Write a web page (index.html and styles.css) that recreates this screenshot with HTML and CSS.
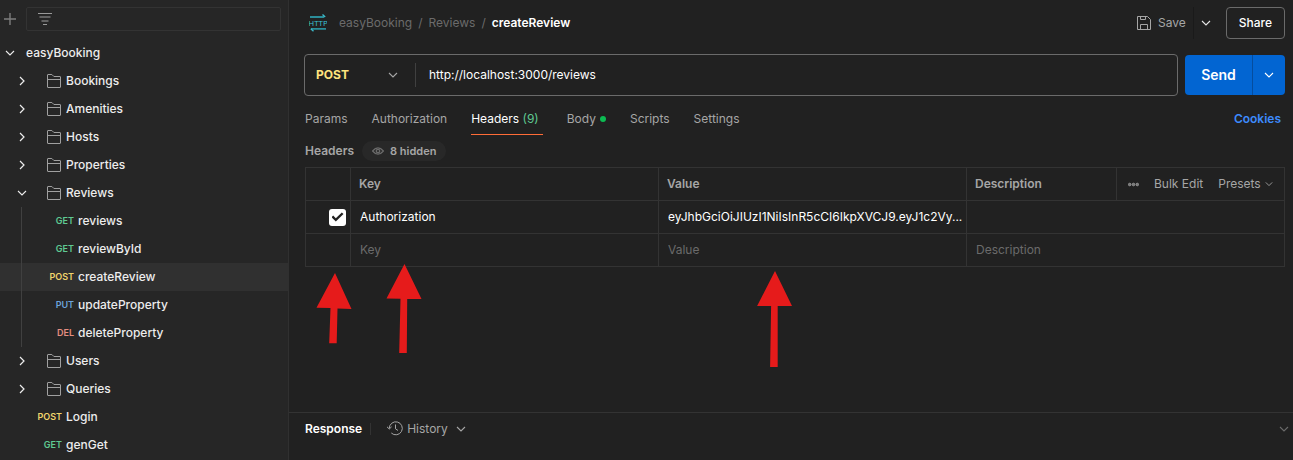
FILE: index.html
```html
<!DOCTYPE html>
<html lang="en">
<head>
<meta charset="utf-8">
<title>createReview</title>
<link rel="stylesheet" href="styles.css">
</head>
<body>
<svg width="0" height="0" class="defs" aria-hidden="true">
  <symbol id="down" viewBox="0 0 10 10"><path d="M1 3l4 4 4-4" fill="none" stroke="currentColor" stroke-width="1.1"/></symbol>
  <symbol id="right" viewBox="0 0 10 10"><path d="M3 1l4 4-4 4" fill="none" stroke="currentColor" stroke-width="1.2"/></symbol>
  <symbol id="folder" viewBox="0 0 14 14"><path d="M.5 13V.9q0-.4.4-.4h4l2 2h6.200q.4 0 .4.4V13q0 .5-.4.5H.9q-.4 0-.4-.5zM.5 5.500h13" fill="none" stroke="currentColor"/></symbol>
</svg>
<div class="app">
  <aside class="sidebar">
    <div class="tools">
      <button class="add" type="button" aria-label="New"><svg width="12" height="12" viewBox="0 0 12 12"><path d="M6 0v12M0 6h12" stroke="currentColor" stroke-width="1.4"/></svg></button>
      <label class="filter">
        <svg width="14" height="12" viewBox="0 0 14 12"><path d="M0 .5h14" stroke="#999"/><path d="M1.500 4h11M3.500 8h7" stroke="#777" stroke-width="1.6"/><path d="M5 11.500h4" stroke="#999"/></svg>
        <input type="text" aria-label="Filter">
      </label>
    </div>
    <ul class="tree">
      <li><button class="row root" type="button"><svg class="chev"><use href="#down"/></svg>easyBooking</button></li>
      <li><button class="row folder" type="button"><svg class="chev"><use href="#right"/></svg><svg class="dir"><use href="#folder"/></svg>Bookings</button></li>
      <li><button class="row folder" type="button"><svg class="chev"><use href="#right"/></svg><svg class="dir"><use href="#folder"/></svg>Amenities</button></li>
      <li><button class="row folder" type="button"><svg class="chev"><use href="#right"/></svg><svg class="dir"><use href="#folder"/></svg>Hosts</button></li>
      <li><button class="row folder" type="button"><svg class="chev"><use href="#right"/></svg><svg class="dir"><use href="#folder"/></svg>Properties</button></li>
      <li><button class="row folder" type="button"><svg class="chev"><use href="#down"/></svg><svg class="dir"><use href="#folder"/></svg>Reviews</button>
        <ul class="tree nested">
          <li><a class="row request" href="#"><span class="method get">GET</span>reviews</a></li>
          <li><a class="row request" href="#"><span class="method get">GET</span>reviewById</a></li>
          <li><a class="row request selected" href="#"><span class="method post">POST</span>createReview</a></li>
          <li><a class="row request" href="#"><span class="method put">PUT</span>updateProperty</a></li>
          <li><a class="row request" href="#"><span class="method del">DEL</span>deleteProperty</a></li>
        </ul>
      </li>
      <li><button class="row folder" type="button"><svg class="chev"><use href="#right"/></svg><svg class="dir"><use href="#folder"/></svg>Users</button></li>
      <li><button class="row folder" type="button"><svg class="chev"><use href="#right"/></svg><svg class="dir"><use href="#folder"/></svg>Queries</button></li>
      <li><a class="row request" href="#"><span class="method post">POST</span>Login</a></li>
      <li><a class="row request" href="#"><span class="method get">GET</span>genGet</a></li>
    </ul>
  </aside>

  <main class="main">
    <header class="topbar">
      <svg class="http" width="18" height="18" viewBox="0 0 18 18" fill="none"><path d="M1 3h14M2 14.800h15" stroke="#2b8d99" stroke-width="1.800"/><path d="M13.500 .600l2.700 2.400M4.500 17.200l-2.700-2.400" stroke="#3cb9c9" stroke-width="1.400"/><text x="9" y="12" text-anchor="middle">HTTP</text></svg>
      <nav class="crumbs" aria-label="Breadcrumb"><a href="#">easyBooking</a><span>/</span><a href="#">Reviews</a><span>/</span><strong>createReview</strong></nav>
      <button class="save" type="button"><svg width="14" height="14" viewBox="0 0 14 14" fill="none" stroke="currentColor"><path d="M.5.5h10l3 3v10H.5zM3.500.500v3h5v-3M3.500 13.500v-5h7v5"/></svg>Save</button>
      <button class="save-more" type="button" aria-label="Save options"><svg class="chev"><use href="#down"/></svg></button>
      <button class="share" type="button">Share</button>
    </header>

    <form class="request-line">
      <div class="url-box">
        <button class="verb" type="button">POST<svg class="chev"><use href="#down"/></svg></button>
        <input class="url" type="text" aria-label="Request URL" value="http://localhost:3000/reviews">
      </div>
      <div class="send">
        <button class="send-main" type="button">Send</button>
        <button class="send-more" type="button" aria-label="Send options"><svg class="chev"><use href="#down"/></svg></button>
      </div>
    </form>

    <nav class="tabs" aria-label="Request">
      <a href="#">Params</a>
      <a href="#">Authorization</a>
      <a class="active" href="#">Headers <span class="count">(9)</span></a>
      <a class="dotted" href="#">Body<i class="dot"></i></a>
      <a href="#">Scripts</a>
      <a href="#">Settings</a>
      <a class="cookies" href="#">Cookies</a>
    </nav>

    <section class="panel">
      <div class="panel-head">
        <h2>Headers</h2>
        <button class="hidden-pill" type="button"><svg width="12" height="8" viewBox="0 0 12 8" fill="none" stroke="#6b6b6b"><path d="M.6 4Q6-2.400 11.400 4 6 10.400.6 4z" stroke-width="1.200"/><circle cx="6" cy="4" r="1.700" stroke-width="1.300"/></svg>8 hidden</button>
      </div>
      <table class="grid">
        <colgroup><col class="c-check"><col><col><col class="c-desc"><col class="c-actions"></colgroup>
        <thead>
          <tr><th></th><th>Key</th><th>Value</th><th>Description</th>
            <td><div class="actions">
              <button type="button" aria-label="Columns"><svg width="11" height="5" viewBox="0 0 11 5" fill="#777" stroke="#a0a0a0" stroke-width=".8"><circle cx="1.700" cy="2.500" r="1.300"/><circle cx="5.500" cy="2.500" r="1.300"/><circle cx="9.300" cy="2.500" r="1.300"/></svg></button>
              <button type="button">Bulk Edit</button>
              <button type="button" class="presets">Presets<svg class="mini"><use href="#down"/></svg></button>
            </div></td></tr>
        </thead>
        <tbody>
          <tr><td class="check"><input type="checkbox" checked aria-label="Enable Authorization"></td>
            <td><input type="text" aria-label="Key" value="Authorization"></td>
            <td><input type="text" aria-label="Value" value="eyJhbGciOiJIUzI1NiIsInR5cCI6IkpXVCJ9.eyJ1c2Vy..."></td>
            <td colspan="2"><input type="text" aria-label="Description"></td></tr>
          <tr><td></td>
            <td><input type="text" aria-label="New key" placeholder="Key"></td>
            <td><input type="text" aria-label="New value" placeholder="Value"></td>
            <td colspan="2"><input type="text" aria-label="New description" placeholder="Description"></td></tr>
        </tbody>
      </table>
    </section>

    <footer class="response">
      <h2>Response</h2>
      <button class="history" type="button"><svg width="16" height="15" viewBox="0 0 16 15" fill="none" stroke="currentColor"><path d="M2.300 7.500A6.500 6.500 0 1 1 4.300 12M0 5.800l2.300 2.200 2.300-2.200M8.500 3.500v4.300l2.500 1.700"/></svg>History<svg class="chev"><use href="#down"/></svg></button>
      <button class="collapse" type="button" aria-label="Collapse response"><svg class="chev"><use href="#down"/></svg></button>
    </footer>
  </main>

  <svg class="arrows" width="500" height="110" viewBox="310 260 500 110" fill="#e61b1b" aria-hidden="true">
    <path d="M335 273l16.500 36-14-.5-.8 34.800h-7.500l1.300-35.300-14-.2z"/>
    <path d="M404.500 264l17 35h-14.300l-.4 54h-7.600l1.300-54.200-14-.3z"/>
    <path d="M775 271l17 35h-14.300v61h-7.600l1-61h-14z"/>
  </svg>
</div>
</body>
</html>
```
FILE: styles.css
```css
* { box-sizing: border-box; }
body {
  margin: 0;
  background: #212121;
  color: #a6a6a6;
  font: 12px/20px Inter, "Liberation Sans", sans-serif;
}
button, input { font: inherit; color: inherit; background: none; border: 0; padding: 0; margin: 0; }
a { color: inherit; text-decoration: none; }
svg { flex: none; }
ul { list-style: none; margin: 0; padding: 0; }
h2 { margin: 0; font-size: 12px; font-weight: 600; }
.defs { position: absolute; }
.chev { width: 10px; height: 10px; }
.mini { width: 8px; height: 8px; }

.app { position: relative; display: flex; min-height: 100vh; }

.sidebar { flex: none; width: 289px; background: #262626; border-right: 1px solid #303030; }
.tools { display: flex; align-items: center; gap: 10px; padding: 7px 7px 8px 4px; }
.add { display: flex; color: #7d7d7d; }
.filter { flex: 1; display: flex; align-items: center; gap: 8px; height: 24px; padding: 0 11px; border: 1px solid #333; border-radius: 2px; }
.filter input { flex: 1; min-width: 0; outline: 0; }

.row {
  display: flex;
  align-items: center;
  width: 100%;
  height: 28px;
  color: #ededed;
  font-weight: 500;
  text-align: left;
}
.root { padding-left: 5px; gap: 11px; }
.folder { padding-left: 17px; }
.dir { width: 14px; height: 14px; margin: 0 5px 0 20px; color: #a0a0a0; }
.request { gap: 4px; }
.method { width: 62px; font-size: 9px; font-weight: 600; text-align: right; }
.nested { position: relative; }
.nested::before { content: ""; position: absolute; left: 21px; top: 0; bottom: 0; width: 1px; background: #404040; }
.nested .method { width: 74px; }
.selected { background: #303030; }
.get { color: #5fc992; }
.post { color: #f0d46c; }
.put { color: #6ba3dc; }
.del { color: #e58e80; }

.main { flex: 1; min-width: 0; display: flex; flex-direction: column; }
.topbar { display: flex; align-items: center; padding: 7px 8px 0 20px; }
.http text { font: 8px "Open Sans", sans-serif; fill: #3cc4d6; }
.crumbs { flex: 1; display: flex; gap: 6px; margin-left: 12px; color: #6b6b6b; }
.crumbs strong { color: #fff; font-weight: 600; }
.save { display: flex; align-items: center; gap: 7px; height: 32px; padding-right: 7px; border-right: 1px solid #1a1a1a; }
.save-more { display: flex; padding: 0 15px 0 7px; color: #e6e6e6; }
.share { height: 32px; padding: 0 12px; border: 1px solid #6b6b6b; border-radius: 4px; color: #fff; font-weight: 500; }

.request-line { display: flex; align-items: center; gap: 7px; padding: 15px 8px 0 15px; }
.url-box { flex: 1; display: flex; align-items: center; height: 42px; border: 1px solid #6b6b6b; border-radius: 4px; }
.verb { display: flex; align-items: center; justify-content: space-between; width: 111px; height: 24px; padding: 0 17px 0 11px; border-right: 1px solid #404040; color: #ffe47e; font-weight: 700; }
.verb .chev { color: #a6a6a6; }
.url { flex: 1; min-width: 0; padding: 0 13px; color: #fff; outline: 0; }
.send { display: flex; height: 40px; border-radius: 4px; overflow: hidden; background: #0265d2; color: #fff; }
.send-main { width: 67px; font-size: 14px; font-weight: 600; }
.send-more { display: flex; align-items: center; justify-content: center; width: 33px; border-left: 1px solid #054d9e; }

.tabs { display: flex; gap: 24px; padding: 7px 12px 0 16px; }
.tabs a { padding: 6px 0 5px; border-bottom: 1px solid transparent; }
.tabs .active { padding-right: 4px; border-color: #ff6c37; color: #fff; }
.count { color: #5fc992; }
.dotted { display: flex; align-items: center; gap: 4px; }
.dot { width: 6px; height: 6px; border-radius: 50%; background: #0cbb52; }
.tabs .cookies { margin-left: auto; color: #3d8bfd; font-weight: 600; }

.panel { flex: 1; padding: 6px 8px 0 16px; }
.panel-head { display: flex; align-items: center; gap: 8px; height: 20px; margin-bottom: 6px; }
.hidden-pill { display: flex; align-items: center; gap: 6px; height: 20px; padding: 0 10px; border-radius: 10px; background: #282828; font-size: 11px; font-weight: 600; }

.grid { width: 100%; table-layout: fixed; border-collapse: collapse; }
.grid th, .grid td { height: 33px; padding: 0 8px; border: 1px solid #333; text-align: left; font-weight: 600; }
.grid td { padding: 0 0 0 9px; font-weight: 400; }
.grid .check { padding: 0 4px; }
.c-check { width: 45px; }
.c-desc { width: 150px; }
.c-actions { width: 168px; }
.grid input { display: block; width: 100%; color: #fff; outline: 0; text-overflow: ellipsis; }
.grid input::placeholder { color: #6b6b6b; }
.grid input[type="checkbox"] {
  appearance: none;
  width: 17px;
  height: 17px;
  margin-left: auto;
  border-radius: 3px;
  background: #fff;
  display: grid;
  place-items: center;
}
.grid input[type="checkbox"]:checked::before {
  content: "";
  width: 12px;
  height: 10px;
  background: #212121;
  clip-path: polygon(0 52%, 14% 36%, 36% 62%, 86% 4%, 100% 20%, 36% 94%);
}
.actions { display: flex; align-items: center; gap: 15px; padding-left: 2px; }
.actions button { display: flex; align-items: center; gap: 4px; }

.response { display: flex; align-items: center; height: 48px; padding: 0 4px 16px 16px; border-top: 1px solid #333; }
.response h2 { padding-right: 8px; border-right: 1px solid #333; line-height: 12px; color: #fff; }
.history { display: flex; align-items: center; gap: 4px; margin-left: 16px; }
.history .chev { margin-left: 4px; }
.collapse { display: flex; margin-left: auto; color: #6b6b6b; }

.arrows { position: absolute; left: 310px; top: 260px; pointer-events: none; }
```
